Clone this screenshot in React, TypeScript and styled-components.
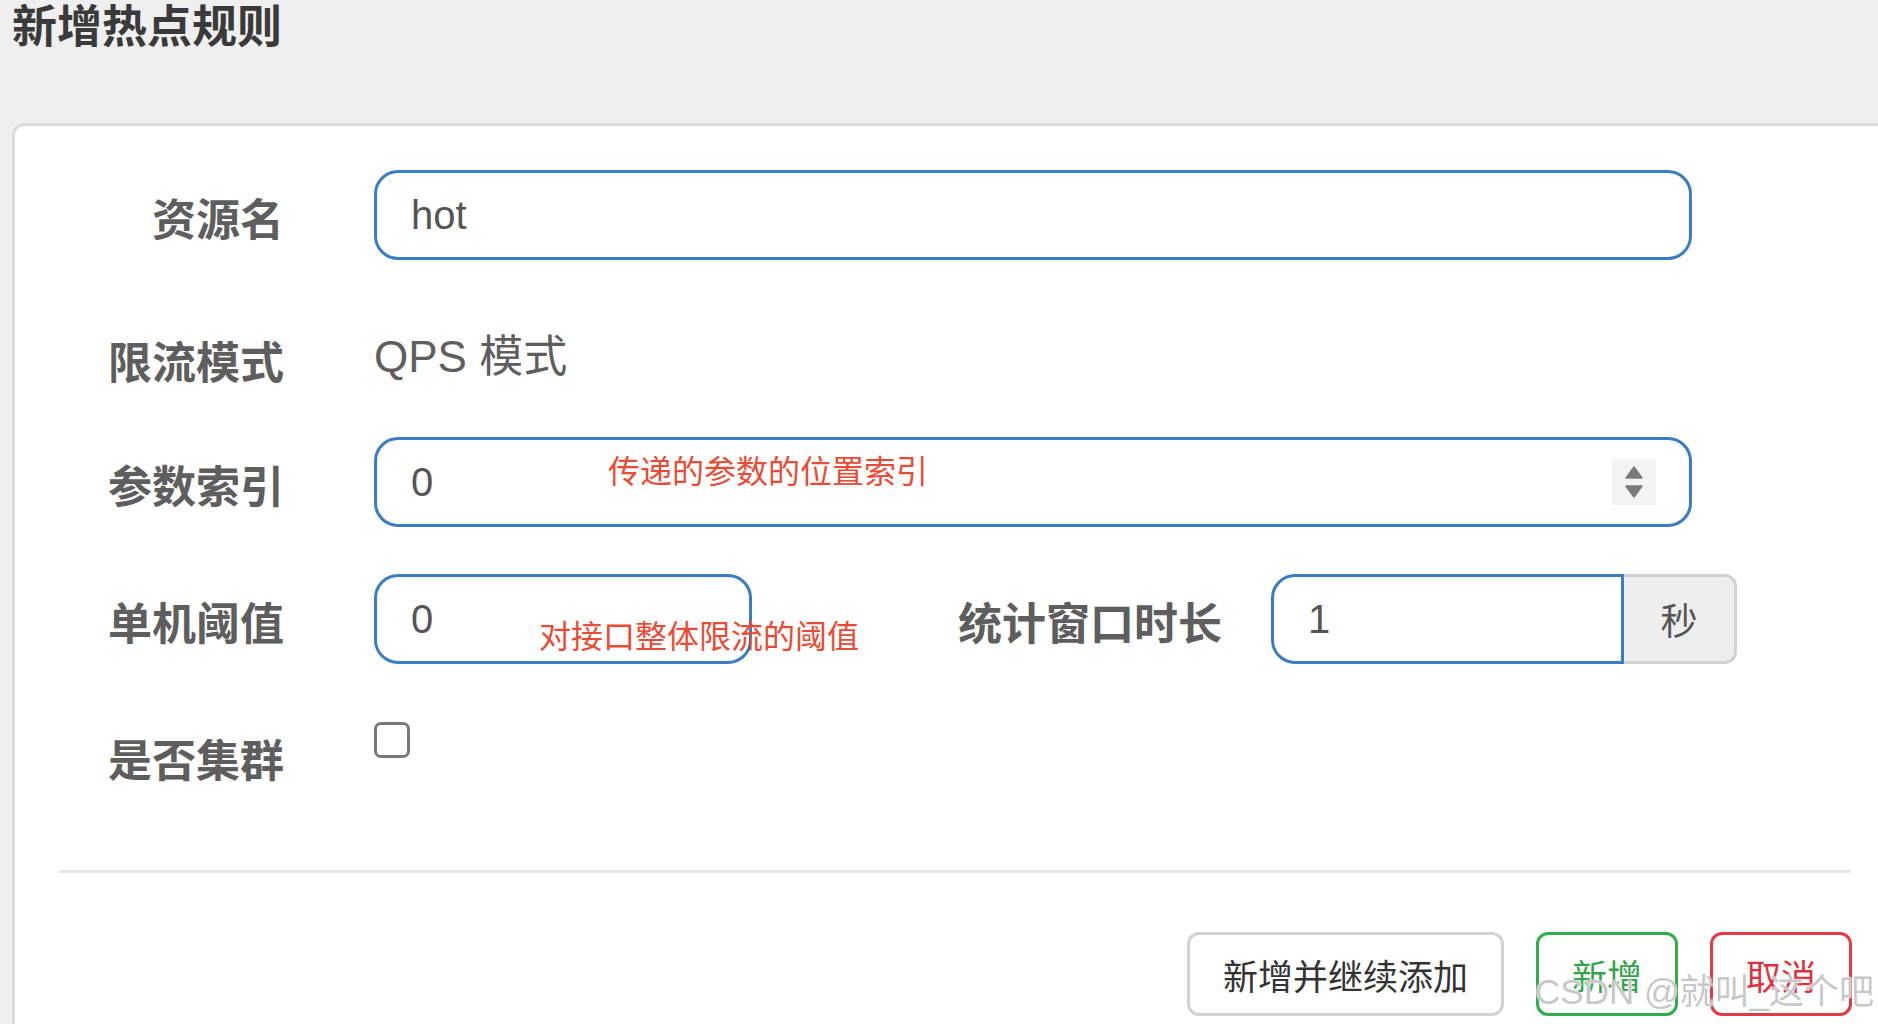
import styled, { createGlobalStyle } from "styled-components";

const GlobalStyle = createGlobalStyle`
  html, body {
    margin: 0;
    padding: 0;
    height: 100%;
    overflow: hidden;
    background: #efefef;
    font-family: "Liberation Sans", "Noto Sans CJK SC", sans-serif;
  }
  * {
    box-sizing: border-box;
  }
`;

const Page = styled.div`
  position: relative;
  height: 1024px;
  padding-left: 12px;
`;

const Title = styled.h4`
  margin: 0 0 67px;
  font-size: 45px;
  line-height: 56px;
  font-weight: 700;
  color: #3a3a3a;
`;

const Panel = styled.div`
  margin-right: -20px;
  min-height: 901px;
  background: #fff;
  border-top: 3px solid #dcdcdc;
  border-left: 3px solid #dcdcdc;
  border-top-left-radius: 12px;
`;

const Body = styled.div`
  padding: 44px 0 22px;
`;

const FormRow = styled.div<{ $static?: boolean }>`
  display: flex;
  align-items: center;
  gap: 90px;
  margin-bottom: 47px;
  min-height: ${(p) => (p.$static ? "83px" : "90px")};
  height: ${(p) => (p.$static ? "83px" : "auto")};
  padding-top: ${(p) => (p.$static ? "18px" : "0")};
`;

const Label = styled.label<{ $width?: number }>`
  flex: 0 0 ${(p) => p.$width ?? 269}px;
  text-align: right;
  font-size: 44px;
  line-height: 1.2;
  padding-top: 13px;
  font-weight: 700;
  color: #5e5e5e;
`;

const StaticText = styled.div`
  font-size: 44px;
  line-height: 1.2;
  color: #5e5e5e;
`;

const Field = styled.div<{ $width: number }>`
  position: relative;
  flex: 0 0 ${(p) => p.$width}px;
`;

const TextInput = styled.input<{ $group?: boolean }>`
  display: block;
  width: 100%;
  height: 90px;
  padding: 0 34px;
  border: 3px solid #3b7dc1;
  border-radius: ${(p) => (p.$group ? "24px 0 0 24px" : "24px")};
  background: #fff;
  font-family: inherit;
  font-size: 40px;
  color: #555;
  outline: none;
`;

const Note = styled.span<{ $left: number; $top: number }>`
  position: absolute;
  left: ${(p) => p.$left}px;
  top: ${(p) => p.$top}px;
  font-size: 32px;
  line-height: 40px;
  white-space: nowrap;
  color: #eb4a34;
  pointer-events: none;
`;

const Spinner = styled.div`
  position: absolute;
  right: 36px;
  top: 22px;
  width: 44px;
  height: 46px;
  background: #f4f4f4;
  display: flex;
  flex-direction: column;
  align-items: center;
  justify-content: center;
  gap: 6px;
`;

const Group = styled.div`
  display: flex;
  margin-left: -41px;
`;

const Addon = styled.span`
  flex: 0 0 113px;
  height: 90px;
  display: flex;
  align-items: center;
  justify-content: center;
  background: #eee;
  border: 3px solid #d2d2d2;
  border-left: none;
  border-radius: 0 12px 12px 0;
  font-size: 37px;
  color: #555;
`;

const Checkbox = styled.span`
  align-self: flex-start;
  margin-top: 11px;
  width: 36px;
  height: 36px;
  border: 3px solid #777;
  border-radius: 7px;
  background: #fff;
`;

const Divider = styled.div`
  height: 3px;
  margin: 0 48px 0 44px;
  background: #e6e6e6;
`;

const Footer = styled.div`
  display: flex;
  justify-content: flex-end;
  gap: 32px;
  margin: 59px 46px 0 0;
`;

const Button = styled.button<{ $tone: "default" | "success" | "danger" }>`
  height: 84px;
  padding: 0 33px;
  background: #fff;
  border: 3px solid
    ${(p) => (p.$tone === "success" ? "#2fae4a" : p.$tone === "danger" ? "#e03c48" : "#d2d2d2")};
  border-radius: 12px;
  font-family: inherit;
  font-size: 35px;
  color: ${(p) => (p.$tone === "success" ? "#34a34a" : p.$tone === "danger" ? "#e0303d" : "#333")};
`;

const Watermark = styled.div`
  position: absolute;
  right: 4px;
  bottom: 10px;
  font-size: 35px;
  white-space: nowrap;
  color: rgba(190, 190, 190, 0.85);
  text-shadow: 0 0 2px #fff, 0 0 1px #fff;
  pointer-events: none;
`;

function Arrow({ up }: { up?: boolean }) {
  return (
    <svg width="18" height="13" viewBox="0 0 18 13">
      <path
        d={up ? "M9 1 L17 12 L1 12 Z" : "M1 1 L17 1 L9 12 Z"}
        fill="#7a7a7a"
        stroke="#7a7a7a"
        strokeWidth="1.5"
        strokeLinejoin="round"
      />
    </svg>
  );
}

export default function App() {
  return (
    <>
      <GlobalStyle />
      <Page>
        <Title>新增热点规则</Title>
        <Panel>
          <Body>
            <FormRow>
              <Label>资源名</Label>
              <Field $width={1318}>
                <TextInput defaultValue="hot" />
              </Field>
            </FormRow>

            <FormRow $static>
              <Label>限流模式</Label>
              <StaticText>QPS 模式</StaticText>
            </FormRow>

            <FormRow>
              <Label>参数索引</Label>
              <Field $width={1318}>
                <TextInput defaultValue="0" />
                <Note $left={234} $top={15}>传递的参数的位置索引</Note>
                <Spinner>
                  <Arrow up />
                  <Arrow />
                </Spinner>
              </Field>
            </FormRow>

            <FormRow>
              <Label>单机阈值</Label>
              <Field $width={378}>
                <TextInput defaultValue="0" />
                <Note $left={165} $top={43}>对接口整体限流的阈值</Note>
              </Field>
              <Label $width={380}>统计窗口时长</Label>
              <Group>
                <Field $width={353}>
                  <TextInput $group defaultValue="1" />
                </Field>
                <Addon>秒</Addon>
              </Group>
            </FormRow>

            <FormRow>
              <Label>是否集群</Label>
              <Checkbox />
            </FormRow>
          </Body>
          <Divider />
          <Footer>
            <Button $tone="default">新增并继续添加</Button>
            <Button $tone="success">新增</Button>
            <Button $tone="danger">取消</Button>
          </Footer>
        </Panel>
        <Watermark>CSDN @就叫_这个吧</Watermark>
      </Page>
    </>
  );
}
